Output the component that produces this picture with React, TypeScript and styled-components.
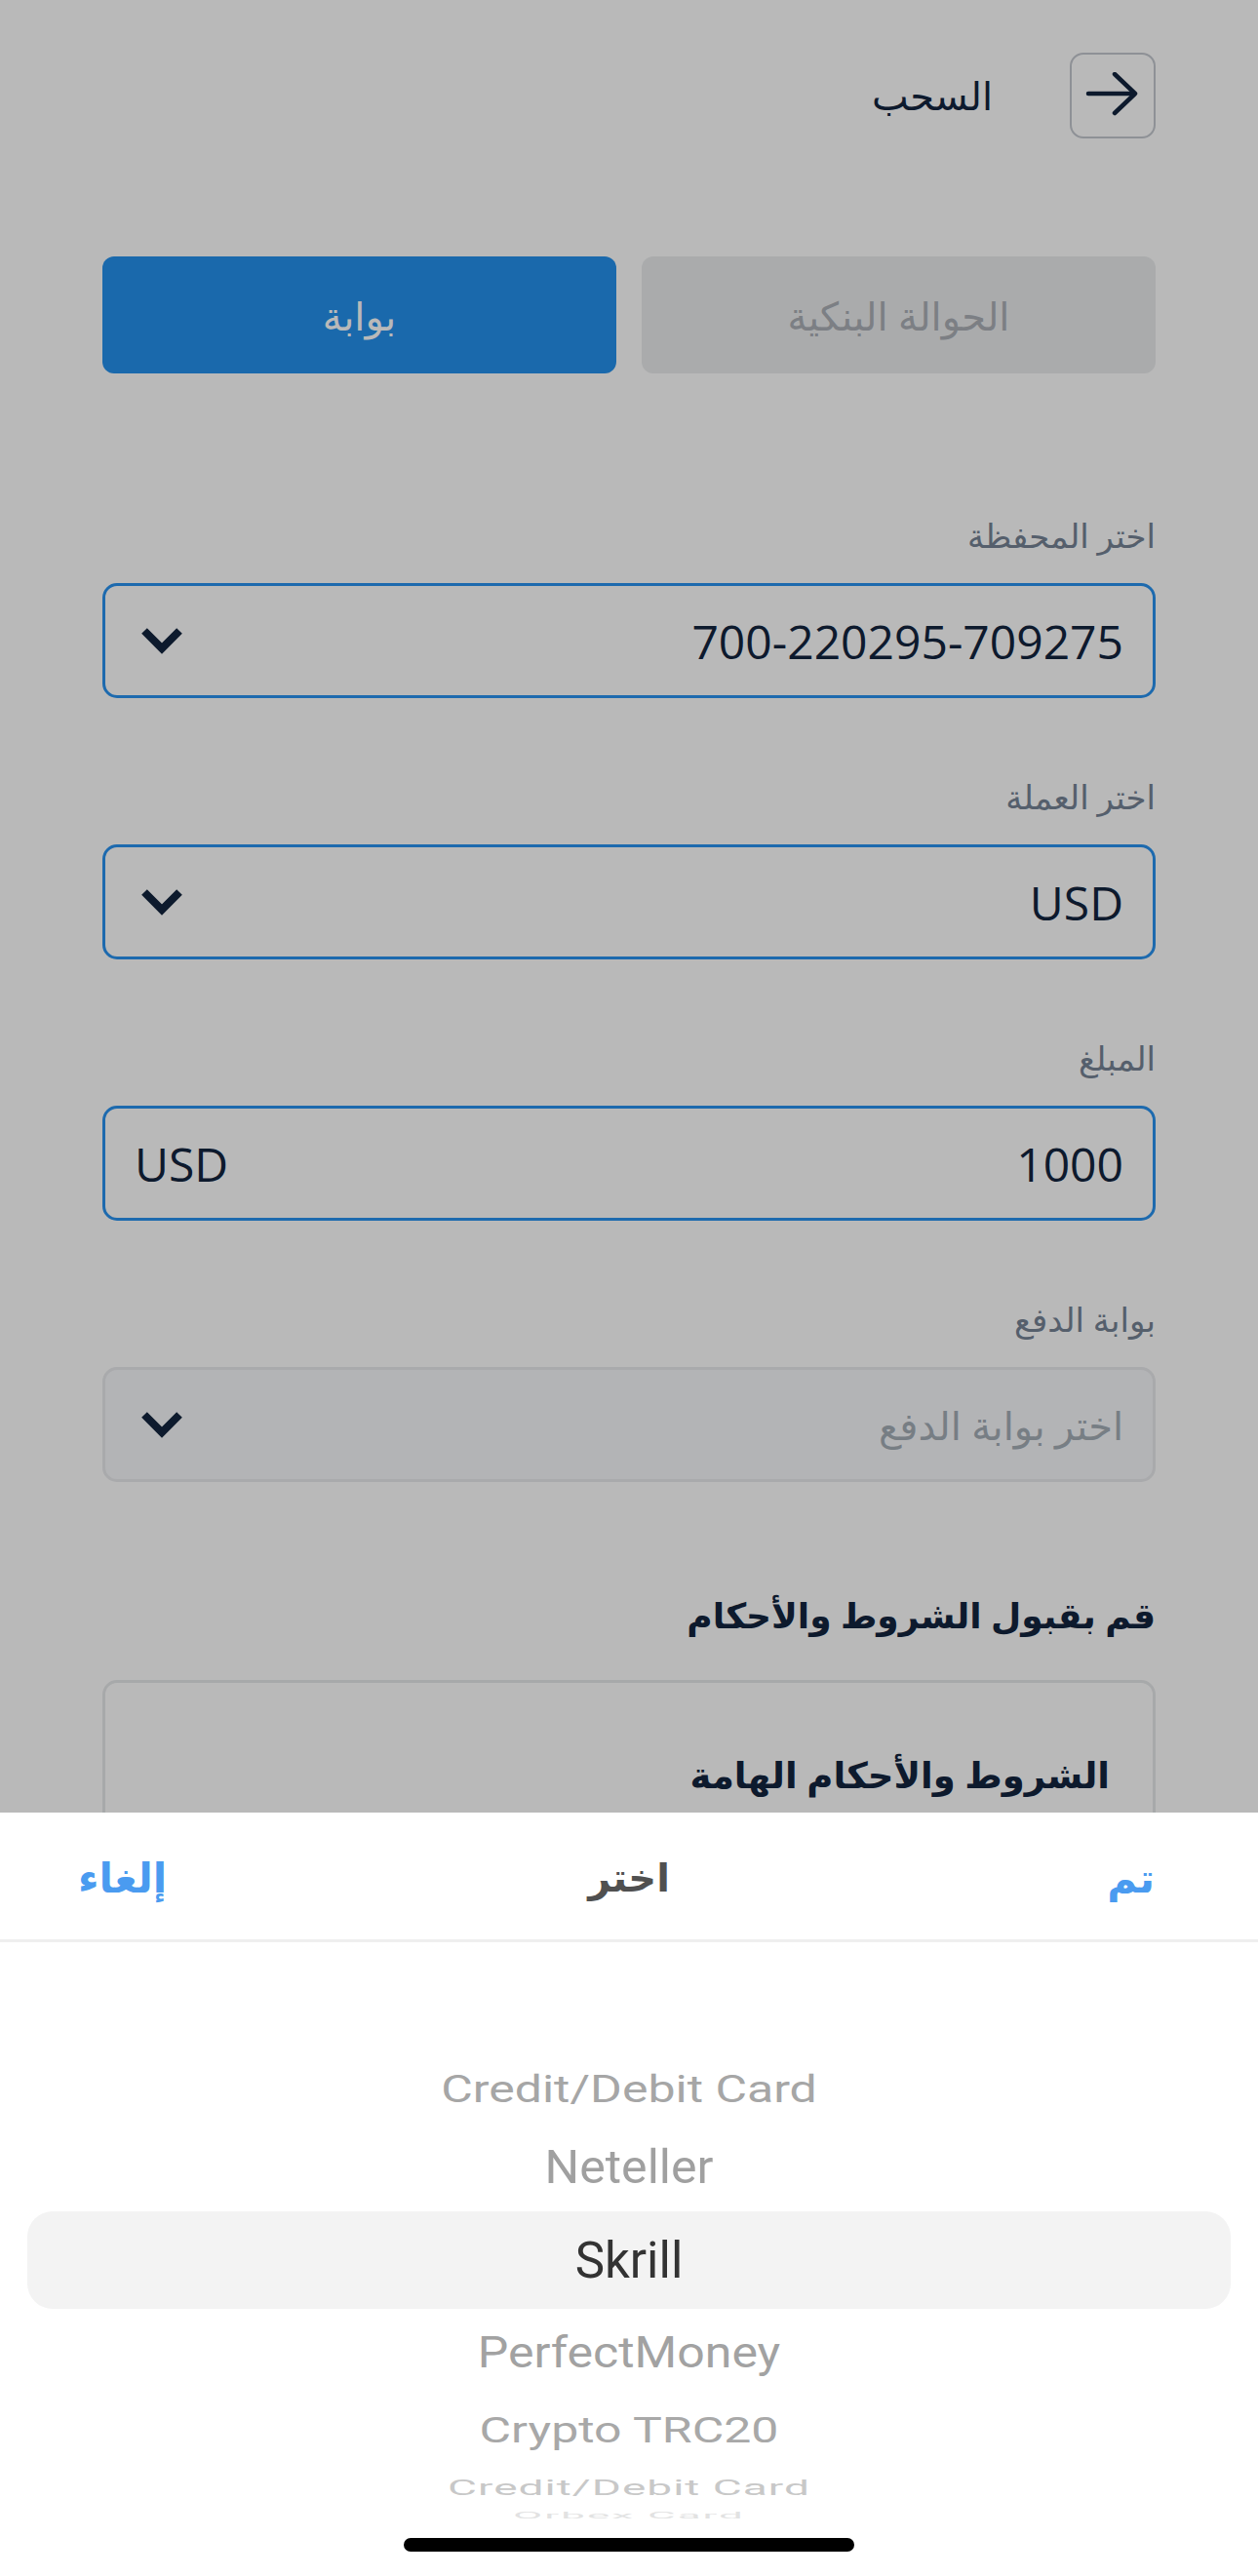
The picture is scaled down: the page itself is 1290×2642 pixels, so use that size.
import React from 'react';
import styled, { createGlobalStyle } from 'styled-components';

const GlobalStyle = createGlobalStyle`
  html, body {
    margin: 0;
    padding: 0;
    background: #ffffff;
  }
  body {
    width: 1290px;
    height: 2642px;
    overflow: hidden;
    font-family: "Open Sans", "DejaVu Sans", sans-serif;
  }
  * { box-sizing: border-box; }
`;

// --- Page behind the sheet ---

const Screen = styled.div`
  position: relative;
  width: 1290px;
  height: 2642px;
  overflow: hidden;
  background: #ffffff;
  direction: rtl;
`;

const Page = styled.main`
  display: flex;
  flex-direction: column;
  padding: 53px 105px 0;
`;

const Header = styled.header`
  display: flex;
  align-items: center;
  gap: 79px;
  height: 89px;
`;

const BackButton = styled.button`
  width: 88px;
  height: 88px;
  padding: 0;
  display: flex;
  align-items: center;
  justify-content: center;
  background: transparent;
  border: 2px solid #c4c8cf;
  border-radius: 14px;
`;

const Title = styled.h1`
  margin: 0;
  font-size: 40px;
  font-weight: 400;
  line-height: 1;
  color: #13253e;
`;

const Tabs = styled.div`
  display: grid;
  grid-template-columns: 1fr 1fr;
  gap: 26px;
  margin-top: 121px;
  height: 120px;
`;

const Tab = styled.button<{ $active?: boolean }>`
  border: none;
  border-radius: 12px;
  font-family: inherit;
  font-size: 40px;
  background: ${p => (p.$active ? '#2491ee' : '#eaecee')};
  color: ${p => (p.$active ? '#ffffff' : '#acb0b6')};
`;

const Fields = styled.div`
  display: flex;
  flex-direction: column;
  gap: 77px;
  margin-top: 142px;
`;

const Field = styled.div`
  display: flex;
  flex-direction: column;
  gap: 25px;
`;

const Label = styled.label`
  font-size: 34px;
  line-height: 48px;
  color: #758395;
`;

const SelectBox = styled.div<{ $disabled?: boolean }>`
  height: 118px;
  display: flex;
  align-items: center;
  justify-content: space-between;
  padding: 0 30px 0 36px;
  border-radius: 15px;
  border: 3px solid ${p => (p.$disabled ? '#e9eaed' : '#2992f0')};
  background: ${p => (p.$disabled ? '#f7f8fb' : 'transparent')};
`;

const Value = styled.span<{ $muted?: boolean }>`
  font-size: ${p => (p.$muted ? '40px' : '48px')};
  color: ${p => (p.$muted ? '#a5aeb7' : '#13253e')};
`;

const Unit = styled.span`
  font-size: 48px;
  color: #13253e;
  margin-left: -6px;
`;

const SectionTitle = styled.h2`
  margin: 113px 0 0;
  font-size: 36px;
  line-height: 48px;
  font-weight: 700;
  color: #13253e;
`;

const TermsBox = styled.div`
  margin-top: 42px;
  height: 400px;
  padding: 70px 44px 0;
  border: 3px solid #e7e9eb;
  border-radius: 15px;
`;

const TermsTitle = styled.h3`
  margin: 0;
  font-size: 37px;
  line-height: 48px;
  font-weight: 700;
  color: #13253e;
`;

// --- Modal picker ---

const Backdrop = styled.div`
  position: absolute;
  inset: 0;
  background: rgba(0, 0, 0, 0.2745);
`;

const Sheet = styled.section`
  position: absolute;
  left: 0;
  right: 0;
  bottom: 0;
  height: 783px;
  background: #ffffff;
  display: flex;
  flex-direction: column;
`;

const SheetHeader = styled.div`
  height: 133px;
  display: grid;
  grid-template-columns: 1fr auto 1fr;
  align-items: center;
  padding: 0 80px;
  border-bottom: 3px solid #efefef;
`;

const SheetAction = styled.button<{ $end?: boolean }>`
  justify-self: ${p => (p.$end ? 'end' : 'start')};
  margin-inline-start: ${p => (p.$end ? '0' : '26px')};
  padding: 0;
  border: none;
  background: none;
  font-family: inherit;
  font-size: 42px;
  font-weight: 700;
  color: #4a9bf0;
`;

const SheetTitle = styled.span`
  font-size: 40px;
  font-weight: 700;
  color: #505050;
`;

const Wheel = styled.div`
  display: flex;
  flex-direction: column;
  padding-top: 116px;
  direction: ltr;
`;

const WheelRow = styled.div<{ $h: number; $selected?: boolean }>`
  height: ${p => p.$h}px;
  display: flex;
  align-items: center;
  justify-content: center;
  margin: 0 28px;
  border-radius: 26px;
  background: ${p => (p.$selected ? '#f3f3f3' : 'transparent')};
`;

const WheelText = styled.span<{ $tone: string; $size: number; $spacing?: number }>`
  display: inline-block;
  font-family: Roboto, "Liberation Sans", sans-serif;
  font-size: ${p => p.$size}px;
  letter-spacing: ${p => p.$spacing ?? 0}px;
  line-height: 1;
  color: ${p => p.$tone};
  white-space: nowrap;
`;

const HomeIndicator = styled.div`
  position: absolute;
  bottom: 25px;
  left: 50%;
  width: 462px;
  height: 14px;
  margin-left: -231px;
  border-radius: 7px;
  background: #000000;
`;

const ArrowIcon = () => (
  <svg width="56" height="48" viewBox="0 0 56 48" fill="none">
    <path d="M3 22h47" stroke="#13253e" strokeWidth="4.5" strokeLinecap="round" />
    <path d="M30 2l21 20-21 20" stroke="#13253e" strokeWidth="4.5" strokeLinecap="round" strokeLinejoin="round" />
  </svg>
);

const Chevron = () => (
  <svg width="44" height="30" viewBox="0 0 44 30" fill="none">
    <path d="M4 5l18 18L40 5" stroke="#13253e" strokeWidth="8" strokeLinejoin="miter" />
  </svg>
);

const wheelItems = [
  { label: 'Credit/Debit Card', h: 70, scale: 0.79, tone: '#a6a6a6', size: 50 },
  { label: 'Neteller', h: 90, scale: 0.95, tone: '#a0a0a0', size: 50 },
  { label: 'Skrill', h: 100, scale: 1, tone: '#333333', size: 51, selected: true },
  { label: 'PerfectMoney', h: 90, scale: 0.9, tone: '#a2a2a2', size: 50 },
  { label: 'Crypto TRC20', h: 70, scale: 0.73, tone: '#a8a8a8', size: 50 },
  { label: 'Credit/Debit Card', h: 46, scale: 0.48, tone: '#c8c8c8', size: 46, spacing: 1 },
  { label: 'Orbex Card', h: 12, scale: 0.2, tone: '#e2e2e2', size: 44, spacing: 2 },
];

export default function App() {
  return (
    <Screen>
      <GlobalStyle />
      <Page>
        <Header>
          <BackButton aria-label="back">
            <ArrowIcon />
          </BackButton>
          <Title>السحب</Title>
        </Header>

        <Tabs>
          <Tab>الحوالة البنكية</Tab>
          <Tab $active>بوابة</Tab>
        </Tabs>

        <Fields>
          <Field>
            <Label>اختر المحفظة</Label>
            <SelectBox>
              <Value>700-220295-709275</Value>
              <Chevron />
            </SelectBox>
          </Field>
          <Field>
            <Label>اختر العملة</Label>
            <SelectBox>
              <Value>USD</Value>
              <Chevron />
            </SelectBox>
          </Field>
          <Field>
            <Label>المبلغ</Label>
            <SelectBox>
              <Value>1000</Value>
              <Unit>USD</Unit>
            </SelectBox>
          </Field>
          <Field>
            <Label>بوابة الدفع</Label>
            <SelectBox $disabled>
              <Value $muted>اختر بوابة الدفع</Value>
              <Chevron />
            </SelectBox>
          </Field>
        </Fields>

        <SectionTitle>قم بقبول الشروط والأحكام</SectionTitle>
        <TermsBox>
          <TermsTitle>الشروط والأحكام الهامة</TermsTitle>
        </TermsBox>
      </Page>

      <Backdrop />

      <Sheet>
        <SheetHeader>
          <SheetAction>تم</SheetAction>
          <SheetTitle>اختر</SheetTitle>
          <SheetAction $end>إلغاء</SheetAction>
        </SheetHeader>
        <Wheel>
          {wheelItems.map((item, i) => (
            <WheelRow key={i} $h={item.h} $selected={item.selected}>
              <WheelText
                $tone={item.tone}
                $size={item.size}
                $spacing={item.spacing}
                style={{ transform: `scaleY(${item.scale})` }}
              >
                {item.label}
              </WheelText>
            </WheelRow>
          ))}
        </Wheel>
      </Sheet>

      <HomeIndicator />
    </Screen>
  );
}
